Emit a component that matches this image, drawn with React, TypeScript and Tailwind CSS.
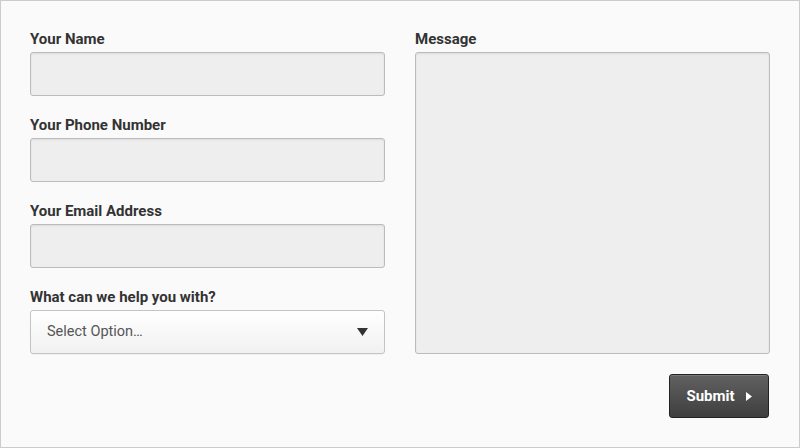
const fields = ["Your Name", "Your Phone Number", "Your Email Address"];

export default function App() {
  return (
    <div className="w-[800px] h-[448px] border border-[#cccccc] bg-[#fafafa] px-[29px] pt-[28px] font-['Roboto',_'Liberation_Sans',_sans-serif] text-[#333333]">
      <div className="grid grid-cols-[355px_355px] gap-x-[30px]">
        {/* Left column */}
        <div className="flex flex-col">
          {fields.map((f) => (
            <div key={f} className="mb-[19px]">
              <label className="block text-[15px] font-bold leading-[20px] mb-[3px]">{f}</label>
              <input
                type="text"
                className="block w-full h-[44px] rounded-[3px] border border-[#bbbbbb] bg-[#eeeeee] shadow-[inset_0_1px_2px_rgba(0,0,0,0.08)] outline-none"
              />
            </div>
          ))}
          <div>
            <label className="block text-[15px] font-bold leading-[20px] mb-[3px]">What can we help you with?</label>
            <div className="flex items-center justify-between w-full h-[44px] rounded-[3px] border border-[#c4c4c4] bg-gradient-to-b from-[#ffffff] to-[#f1f1f1] pl-[16px] pr-[16px] shadow-[0_1px_1px_rgba(0,0,0,0.04)]">
              <span className="text-[14.5px] text-[#555555]">Select Option…</span>
              <svg width="11" height="8" viewBox="0 0 11 8">
                <path d="M0 0h11L5.5 8z" fill="#333333" />
              </svg>
            </div>
          </div>
        </div>

        {/* Right column */}
        <div className="flex flex-col">
          <label className="block text-[15px] font-bold leading-[20px] mb-[3px]">Message</label>
          <textarea className="block w-full h-[302px] resize-none rounded-[3px] border border-[#bbbbbb] bg-[#eeeeee] shadow-[inset_0_1px_2px_rgba(0,0,0,0.08)] outline-none" />
          <div className="flex justify-end mt-[20px] pr-[1px]">
            <button className="flex items-center justify-center gap-[11px] w-[100px] h-[44px] rounded-[3px] border border-[#222222] bg-gradient-to-b from-[#616161] to-[#3f3f3f] text-white text-[15px] font-bold shadow-[inset_0_1px_0_rgba(255,255,255,0.15)]">
              <span>Submit</span>
              <svg width="6" height="9" viewBox="0 0 6 9">
                <path d="M0 0l6 4.5L0 9z" fill="#ffffff" />
              </svg>
            </button>
          </div>
        </div>
      </div>
    </div>
  );
}
